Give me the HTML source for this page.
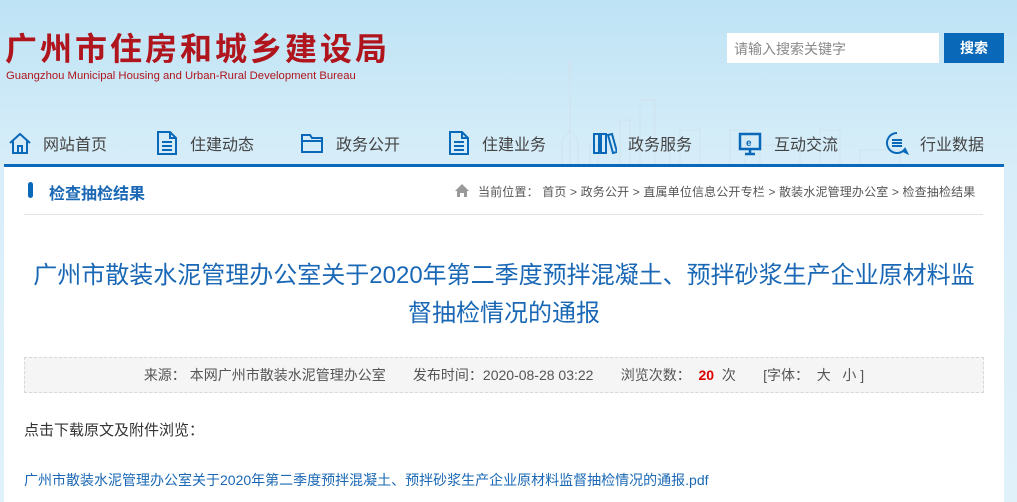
<!DOCTYPE html>
<html><head><meta charset="utf-8"><style>
*{margin:0;padding:0;box-sizing:border-box}
body{width:1017px;height:502px;overflow:hidden;background:linear-gradient(#bee3f5,#d8eef9 170px,#e0f1fa);font-family:"Liberation Sans","Noto Sans CJK SC",sans-serif;position:relative}
.a{position:absolute}
.logo{left:5px;top:30px;font-size:32px;line-height:34px;font-weight:bold;color:#b0141c;letter-spacing:3px;white-space:nowrap;font-family:"Noto Sans CJK SC",sans-serif}
.en{left:6px;top:70px;font-size:11.3px;color:#b0141c;white-space:nowrap}
.inp{left:727px;top:33px;width:212px;height:30px;background:#fff;font-size:14px;color:#888;padding:6px 7px}
.btn{left:944px;top:33px;width:60px;height:30px;background:#0a68b8;color:#fff;font-size:14px;text-align:center;line-height:30px;font-weight:bold}
.nav{top:131px;font-size:16px;color:#444;white-space:nowrap}
.ic{top:130px;width:24px;height:26px}
.line{left:4px;top:164px;width:1000px;height:3px;background:#0a68b8}
.panel{left:4px;top:167px;width:1000px;height:335px;background:#fff}
.bar{left:28px;top:182px;width:5px;height:16px;border-radius:3px;background:#0a68b8}
.sec{left:49px;top:180px;font-size:16px;font-weight:bold;color:#1a68b5}
.bc{left:478px;top:183px;font-size:12px;color:#555;white-space:nowrap;letter-spacing:0.15px}
.hr{left:24px;top:214px;width:959px;height:1px;background:#e3e3e3}
.t{left:0;width:1008px;text-align:center;font-size:24px;color:#1a68b5;white-space:nowrap}
.meta{left:24px;top:357px;width:960px;height:36px;border:1px dashed #d8d8d8;background:#f5f5f5;font-size:14px;color:#555;text-align:center;line-height:34px;white-space:nowrap}
</style></head><body>
<svg class="a" style="left:560px;top:50px" width="360" height="115" fill="none" stroke="#d0e2ec" stroke-width="1">
<path d="M10 115V30L8 25L10 10L12 25L10 30V115M2 115V90L10 80L18 90V115M30 115V95H38V115M60 115V70H70V115M80 115V50H95V115M95 115V90H110V115M120 115V80H140V115M170 115V80H185V115M200 115V95H240V115M260 115V80H280V115M300 115V100H340V115"/>
</svg>
<div class="a logo">广州市住房和城乡建设局</div>
<div class="a en">Guangzhou Municipal Housing and Urban-Rural Development Bureau</div>
<div class="a inp">请输入搜索关键字</div>
<div class="a btn">搜索</div>

<svg class="a ic" style="left:8px" viewBox="0 0 24 26" fill="none" stroke="#0a68b8" stroke-width="2"><path d="M2 13L12 4L22 13M5 11V23H19V11M10 23V16H14V23"/></svg>
<div class="a nav" style="left:43px">网站首页</div>
<svg class="a ic" style="left:155px" viewBox="0 0 24 26" fill="none" stroke="#0a68b8" stroke-width="2"><path d="M3 2H15L21 8V24H3Z M15 2V8H21 M7 12H17M7 16H17M7 20H17"/></svg>
<div class="a nav" style="left:190px">住建动态</div>
<svg class="a ic" style="left:300px" viewBox="0 0 24 26" fill="none" stroke="#0a68b8" stroke-width="2"><path d="M2 5H10L12 8H22V22H2Z M2 11H22"/></svg>
<div class="a nav" style="left:336px">政务公开</div>
<svg class="a ic" style="left:447px" viewBox="0 0 24 26" fill="none" stroke="#0a68b8" stroke-width="2"><path d="M3 2H15L21 8V24H3Z M15 2V8H21 M7 12H17M7 16H17M7 20H17"/></svg>
<div class="a nav" style="left:482px">住建业务</div>
<svg class="a ic" style="left:593px" viewBox="0 0 24 26" fill="none" stroke="#0a68b8" stroke-width="2"><path d="M1 4H6V23H1ZM8 4H13V23H8ZM15 5L19 4L24 22L20 23Z"/></svg>
<div class="a nav" style="left:628px">政务服务</div>
<svg class="a ic" style="left:738px" viewBox="0 0 24 26" fill="none" stroke="#0a68b8" stroke-width="2.5"><path d="M2 4H22V19H2ZM12 19V23M7 24H17"/><text x="8" y="16" font-size="10" fill="#0a68b8" stroke="none" font-weight="bold">e</text></svg>
<div class="a nav" style="left:774px">互动交流</div>
<svg class="a ic" style="left:885px" viewBox="0 0 24 26" fill="none" stroke="#0a68b8" stroke-width="2"><path d="M12 3A10 10 0 1 0 20 19L22 23L18 21"/><path d="M7 10H17M7 13H17M7 16H17"/></svg>
<div class="a nav" style="left:920px">行业数据</div>

<div class="a line"></div>
<div class="a panel"></div>
<div class="a bar"></div>
<div class="a sec">检查抽检结果</div>
<svg class="a" style="left:454px;top:183px" width="16" height="14"><path d="M8 1L15 8H13V14H10V10H6V14H3V8H1Z" fill="#999"/></svg>
<div class="a bc">当前位置： 首页 &gt; 政务公开 &gt; 直属单位信息公开专栏 &gt; 散装水泥管理办公室 &gt; 检查抽检结果</div>
<div class="a hr"></div>
<div class="a t" style="top:255px">广州市散装水泥管理办公室关于2020年第二季度预拌混凝土、预拌砂浆生产企业原材料监</div>
<div class="a t" style="top:293px">督抽检情况的通报</div>
<div class="a meta">来源：&nbsp;本网广州市散装水泥管理办公室&nbsp;&nbsp;&nbsp;&nbsp;&nbsp;&nbsp;&nbsp;发布时间：2020-08-28 03:22&nbsp;&nbsp;&nbsp;&nbsp;&nbsp;&nbsp;&nbsp;浏览次数：&nbsp;&nbsp;<b style="color:#d00">20</b>&nbsp;&nbsp;次&nbsp;&nbsp;&nbsp;&nbsp;&nbsp;&nbsp;&nbsp;[字体：&nbsp;&nbsp;大&nbsp;&nbsp;&nbsp;小&nbsp;]</div>
<div class="a" style="left:24px;top:419px;font-size:15px;color:#333">点击下载原文及附件浏览：</div>
<div class="a" style="left:24px;top:470px;font-size:14px;color:#1a68b5;white-space:nowrap">广州市散装水泥管理办公室关于2020年第二季度预拌混凝土、预拌砂浆生产企业原材料监督抽检情况的通报.pdf</div>
</body></html>
